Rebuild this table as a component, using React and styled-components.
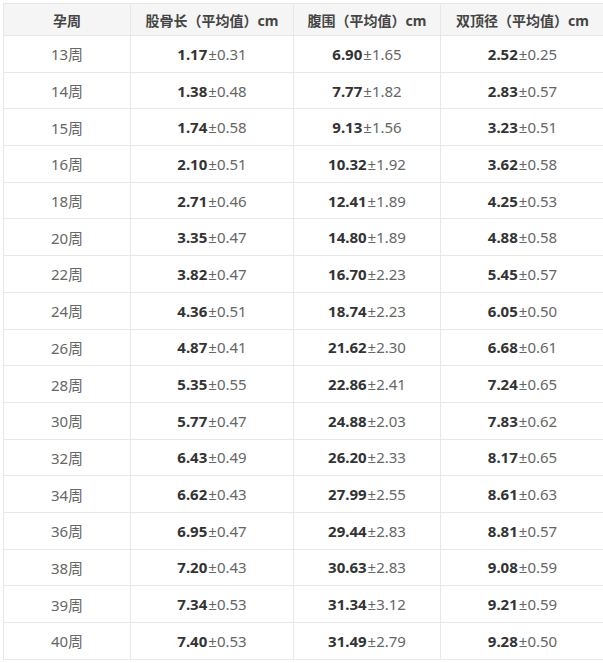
import React from "react";
import styled, { createGlobalStyle } from "styled-components";

const rows = [
  ["13周", "1.17", "0.31", "6.90", "1.65", "2.52", "0.25"],
  ["14周", "1.38", "0.48", "7.77", "1.82", "2.83", "0.57"],
  ["15周", "1.74", "0.58", "9.13", "1.56", "3.23", "0.51"],
  ["16周", "2.10", "0.51", "10.32", "1.92", "3.62", "0.58"],
  ["18周", "2.71", "0.46", "12.41", "1.89", "4.25", "0.53"],
  ["20周", "3.35", "0.47", "14.80", "1.89", "4.88", "0.58"],
  ["22周", "3.82", "0.47", "16.70", "2.23", "5.45", "0.57"],
  ["24周", "4.36", "0.51", "18.74", "2.23", "6.05", "0.50"],
  ["26周", "4.87", "0.41", "21.62", "2.30", "6.68", "0.61"],
  ["28周", "5.35", "0.55", "22.86", "2.41", "7.24", "0.65"],
  ["30周", "5.77", "0.47", "24.88", "2.03", "7.83", "0.62"],
  ["32周", "6.43", "0.49", "26.20", "2.33", "8.17", "0.65"],
  ["34周", "6.62", "0.43", "27.99", "2.55", "8.61", "0.63"],
  ["36周", "6.95", "0.47", "29.44", "2.83", "8.81", "0.57"],
  ["38周", "7.20", "0.43", "30.63", "2.83", "9.08", "0.59"],
  ["39周", "7.34", "0.53", "31.34", "3.12", "9.21", "0.59"],
  ["40周", "7.40", "0.53", "31.49", "2.79", "9.28", "0.50"],
];

const GlobalStyle = createGlobalStyle`
  body {
    margin: 0;
    background: #fff;
    overflow: hidden;
    font-family: "Noto Sans", "Noto Sans CJK SC", sans-serif;
  }
`;

const Wrapper = styled.div`
  padding: 3px 0 0 3px;
`;

const Table = styled.table`
  width: 601px;
  border-collapse: collapse;
  table-layout: fixed;
`;

const HeadCell = styled.th`
  height: 31px;
  padding: 0;
  background: #f5f5f5;
  border: 1px solid #e6e6e6;
  font-size: 14px;
  font-weight: 700;
  color: #444;
  text-align: center;
  vertical-align: middle;
  white-space: nowrap;
`;

const Cell = styled.td`
  height: 35.7px;
  padding: 0;
  border: 1px solid #e8e8e8;
  font-size: 15px;
  color: #666;
  text-align: center;
  vertical-align: middle;
  white-space: nowrap;
`;

const Mean = styled.b`
  font-weight: 700;
  color: #333;
  margin-right: 1px;
`;

const Dev = styled.span`
  font-weight: 400;
  color: #666;
`;

const Value = ({ mean, dev }) => (
  <>
    <Mean>{mean}</Mean>
    <Dev>±{dev}</Dev>
  </>
);

const App = () => {
  return (
    <Wrapper>
      <GlobalStyle />
      <Table>
        <colgroup>
          <col style={{ width: 127 }} />
          <col style={{ width: 163 }} />
          <col style={{ width: 147 }} />
          <col style={{ width: 164 }} />
        </colgroup>
        <thead>
          <tr>
            <HeadCell>孕周</HeadCell>
            <HeadCell>股骨长（平均值）cm</HeadCell>
            <HeadCell>腹围（平均值）cm</HeadCell>
            <HeadCell>双顶径（平均值）cm</HeadCell>
          </tr>
        </thead>
        <tbody>
          {rows.map(([week, a, ad, b, bd, c, cd]) => (
            <tr key={week}>
              <Cell>{week}</Cell>
              <Cell>
                <Value mean={a} dev={ad} />
              </Cell>
              <Cell>
                <Value mean={b} dev={bd} />
              </Cell>
              <Cell>
                <Value mean={c} dev={cd} />
              </Cell>
            </tr>
          ))}
        </tbody>
      </Table>
    </Wrapper>
  );
};

export default App;
